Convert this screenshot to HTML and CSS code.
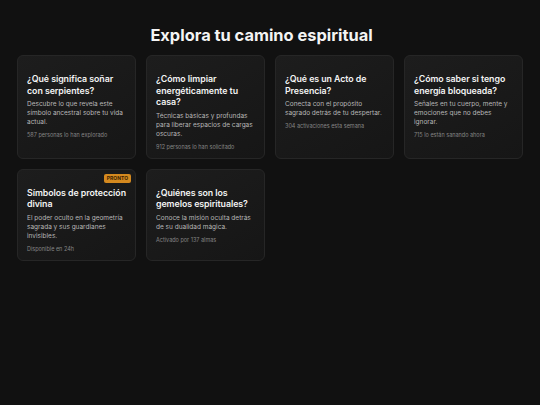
FILE: index.html
```html
<!DOCTYPE html>
<html lang="es">
<head>
<meta charset="utf-8">
<title>Explora tu camino espiritual</title>
<link rel="stylesheet" href="styles.css">
</head>
<body>
<main class="page">
  <h1 class="heading">Explora tu camino espiritual</h1>
  <div class="grid">
    <article class="card">
      <h2 class="card-title">¿Qué significa soñar con serpientes?</h2>
      <p class="card-desc">Descubre lo que revela este símbolo ancestral sobre tu vida actual.</p>
      <p class="card-meta">587 personas lo han explorado</p>
    </article>
    <article class="card">
      <h2 class="card-title">¿Cómo limpiar energéticamente tu casa?</h2>
      <p class="card-desc">Técnicas básicas y profundas para liberar espacios de cargas oscuras.</p>
      <p class="card-meta">912 personas lo han solicitado</p>
    </article>
    <article class="card">
      <h2 class="card-title">¿Qué es un Acto de Presencia?</h2>
      <p class="card-desc">Conecta con el propósito sagrado detrás de tu despertar.</p>
      <p class="card-meta">304 activaciones esta semana</p>
    </article>
    <article class="card">
      <h2 class="card-title">¿Cómo saber si tengo energía bloqueada?</h2>
      <p class="card-desc">Señales en tu cuerpo, mente y emociones que no debes ignorar.</p>
      <p class="card-meta">715 lo están sanando ahora</p>
    </article>
    <article class="card">
      <span class="badge">PRONTO</span>
      <h2 class="card-title">Símbolos de protección divina</h2>
      <p class="card-desc">El poder oculto en la geometría sagrada y sus guardianes invisibles.</p>
      <p class="card-meta">Disponible en 24h</p>
    </article>
    <article class="card">
      <h2 class="card-title">¿Quiénes son los gemelos espirituales?</h2>
      <p class="card-desc">Conoce la misión oculta detrás de su dualidad mágica.</p>
      <p class="card-meta">Activado por 137 almas</p>
    </article>
  </div>
</main>
</body>
</html>
```
FILE: styles.css
```css
* { box-sizing: border-box; }
html, body {
  margin: 0;
  padding: 0;
  background: #111111;
}
body {
  font-family: Inter, "Noto Sans", sans-serif;
  color: #f2f2f2;
}
.page {
  width: 506px;
  margin: 0 auto;
  padding-top: 24px;
}
.heading {
  margin: 0 0 9px;
  padding-right: 17px;
  text-align: center;
  font-size: 16.4px;
  line-height: 22px;
  font-weight: 700;
  color: #f4f4f4;
}
.grid {
  display: grid;
  grid-template-columns: repeat(4, 119px);
  gap: 10px 10px;
}
.card {
  position: relative;
  background: linear-gradient(150deg, #1d1d1d 0%, #161616 100%);
  border: 1px solid #262626;
  border-radius: 6px;
  padding: 17px 8px 6px 9px;
}
.card-title {
  margin: 0;
  font-size: 8.8px;
  line-height: 11.5px;
  font-weight: 600;
  letter-spacing: -0.05px;
  color: #f3f3f3;
}
.card-desc {
  margin: 4px 0 0;
  font-size: 6.5px;
  line-height: 9px;
  color: #b8b8b8;
}
.card-meta {
  margin: 4px 0 0;
  font-size: 5.5px;
  line-height: 9px;
  color: #858585;
}
.badge {
  position: absolute;
  top: 4px;
  right: 4px;
  background: #d4891f;
  color: #3a2100;
  font-size: 5px;
  font-weight: 700;
  line-height: 9px;
  padding: 0 3px;
  border-radius: 2px;
}
```
